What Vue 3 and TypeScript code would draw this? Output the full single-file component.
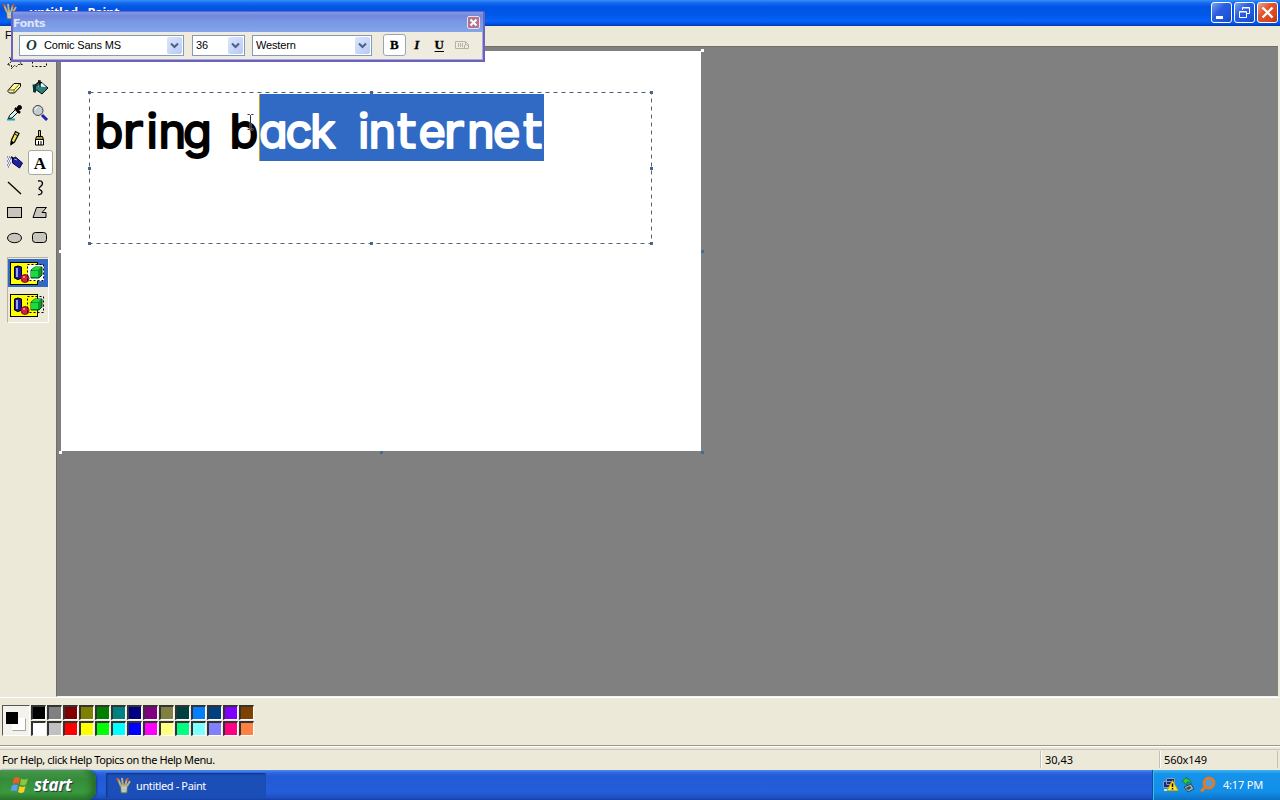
<script setup lang="ts">
interface Swatch { top: string; bottom: string }

const swatches: Swatch[] = [
  { top: '#000000', bottom: '#ffffff' },
  { top: '#808080', bottom: '#c0c0c0' },
  { top: '#800000', bottom: '#ff0000' },
  { top: '#808000', bottom: '#ffff00' },
  { top: '#008000', bottom: '#00ff00' },
  { top: '#008080', bottom: '#00ffff' },
  { top: '#000080', bottom: '#0000ff' },
  { top: '#800080', bottom: '#ff00ff' },
  { top: '#808040', bottom: '#ffff80' },
  { top: '#004040', bottom: '#00ff80' },
  { top: '#0080ff', bottom: '#80ffff' },
  { top: '#004080', bottom: '#8080ff' },
  { top: '#8000ff', bottom: '#ff0080' },
  { top: '#804000', bottom: '#ff8040' },
]

const tools: string[] = [
  'free', 'select', 'eraser', 'fill', 'pick', 'magnify', 'pencil', 'brush',
  'spray', 'text', 'line', 'curve', 'rect', 'polygon', 'ellipse', 'rounded',
]

const frameHandles: number[][] = [
  [0, 0], [282, 0], [562, 0], [0, 76], [562, 76], [0, 151], [282, 151], [562, 151],
]
</script>

<template>
  <div class="desktop">
    <header class="titlebar">
      <svg class="app-icon" width="16" height="18" viewBox="0 0 16 18">
        <path d="M4 8h8l-1 8H5z" fill="#a9c0c8" stroke="#4a6078" />
        <path d="M5 9L2 2M7 9L6 1M9 9L11 2M11 9L14 4" stroke="#c0b078" stroke-width="2" />
        <path d="M2 4L1 1M11 4l1-3" stroke="#b05040" stroke-width="2" />
        <path d="M6 11h4M6 14h3" stroke="#e8e060" />
      </svg>
      <span class="title-text">untitled - Paint</span>
      <div class="win-buttons">
        <span class="win-btn"><svg width="19" height="19"><path d="M4 14.500h7" stroke="#fff" stroke-width="3" /></svg></span>
        <span class="win-btn"><svg width="19" height="19" fill="none" stroke="#fff"><path d="M7.500 7V4.500h7v6h-3M7 5h8" /><path d="M4.500 8.500h7v6h-7zM4 9h8" /></svg></span>
        <span class="win-btn close"><svg width="19" height="19"><path d="M4.500 4.500l10 10M14.500 4.500l-10 10" stroke="#fff" stroke-width="2.300" /></svg></span>
      </div>
    </header>
    <nav class="menubar">File</nav>

    <main class="workspace">
      <aside class="toolbox">
        <div class="tools">
          <span v-for="t in tools" :key="t" class="tool" :class="{ active: t === 'text' }">
            <svg width="20" height="20" viewBox="0 0 20 20" fill="none" stroke="#000">
              <path v-if="t === 'free'" d="M2.500 11.500l4-3-2-4 5 3 5-3-1 4 4 3h-4l-2 2-2-1-3 3v-3z" stroke-dasharray="2 1" />
              <rect v-else-if="t === 'select'" x="2.500" y="4.500" width="14" height="9" stroke-dasharray="2 2" />
              <g v-else-if="t === 'eraser'">
                <path d="M3 12.500L9 5.500h6.500v3l-6 6.500H4.500L3 13.500z" fill="#fff5a0" />
                <path d="M3.500 12h5.500l6-6.500M9 12v3" stroke="#6a6420" />
              </g>
              <g v-else-if="t === 'fill'">
                <path d="M5 9l6-5 7 6-6 6-7-5z" fill="#2a7f80" />
                <path d="M8 8.500l4-3.500 4 4z" fill="#e8ffff" stroke="none" />
                <path d="M4 14V8l5-4M10 9V3H8" stroke-width="1.300" />
                <path d="M2.500 6.500h3.500v8H3.500z" fill="#033" stroke="none" />
              </g>
              <g v-else-if="t === 'pick'">
                <path d="M2 16.500h8" stroke="#22a0b0" stroke-width="2" />
                <path d="M3.500 15.500l1-3 6-6 2.500 2.500-6 6z" fill="#c9f5f6" />
                <path d="M10 5l5 5M11 8l4-4" stroke-width="2.500" />
                <circle cx="14.500" cy="4.500" r="2" fill="#000" />
              </g>
              <g v-else-if="t === 'magnify'">
                <path d="M12 12l5 5" stroke="#2020b0" stroke-width="3" />
                <circle cx="8" cy="7.500" r="5" fill="#c4ccd0" stroke="#444" />
                <path d="M5 7q1-3 3-3" stroke="#fff" />
              </g>
              <g v-else-if="t === 'pencil'">
                <path d="M6 16.500l.5-4.500 4-8.500 3.500 2-4.500 8.500z" fill="#f3e34d" stroke-width="1.200" />
                <path d="M10 6l3 2" /><path d="M6 16.500l.3-3.500 2 1.500z" fill="#000" />
              </g>
              <g v-else-if="t === 'brush'">
                <path d="M8.500 2.500h2v6h-2z" fill="#d8c850" />
                <path d="M6.500 8.500h6l1 3h-8z" fill="#a8a030" />
                <path d="M5.500 11.500h8v5.500h-8z" fill="#fff" /><path d="M8.500 13v4M11 13v4" />
              </g>
              <g v-else-if="t === 'spray'">
                <path d="M7.500 6l3-2 7 6-3 5-7-5z" fill="#20209a" stroke="#000050" />
                <path d="M9 6l3 1" stroke="#9aaaff" /><path d="M6 4l3 2" stroke-width="2" />
                <path d="M2 4h5M3 6h4M2 8h4M3 10h3M2 12h3M3 14h2" stroke="#3030c8" stroke-dasharray="1 1" />
              </g>
              <text v-else-if="t === 'text'" x="10" y="15.500" class="tool-letter" text-anchor="middle">A</text>
              <path v-else-if="t === 'line'" d="M3 4l13 12" stroke-width="1.300" />
              <path v-else-if="t === 'curve'" d="M8 3c5-1 6 3 2 6-4 3 5 3 1 7l-3 1" stroke-width="1.300" />
              <rect v-else-if="t === 'rect'" x="2.500" y="4.500" width="14" height="10" fill="#c8c6bc" />
              <path v-else-if="t === 'polygon'" d="M6.500 4.500h10l-4.500 5h4v5h-13z" fill="#c8c6bc" />
              <ellipse v-else-if="t === 'ellipse'" cx="9.500" cy="10" rx="7" ry="4.700" fill="#c8c6bc" />
              <rect v-else x="2.500" y="4.500" width="14" height="10" rx="3" fill="#c8c6bc" />
            </svg>
          </span>
        </div>
        <div class="options">
          <span v-for="n in 2" :key="n" class="option" :class="{ chosen: n === 1 }">
            <svg width="36" height="25" viewBox="0 0 36 25">
              <rect x=".5" y="1.500" width="27" height="22" fill="#ffff00" stroke="#000" />
              <rect v-if="n === 1" x="18" y="4" width="16" height="16" fill="#fff" />
              <path d="M4.500 6v11q3.500 3 7 0V6q-3.500-2-7 0z" fill="#1818a8" stroke="#000" />
              <path d="M7 7v9" stroke="#c4d8ff" stroke-width="1.500" />
              <circle cx="15" cy="17.500" r="4" fill="#dc1c38" stroke="#7c1020" />
              <circle cx="14" cy="16" r="1" fill="#ffb0b0" />
              <path d="M21 9l4-3h7v8l-3 3h-8z" fill="#08a020" stroke="#043" />
              <path d="M21 9l4-3h6l-3 3zM21 10h7v6h-7z" fill="#20d840" />
              <rect x="17.500" y="3.500" width="16" height="16" fill="none" stroke="#000" stroke-dasharray="2 2" />
            </svg>
          </span>
        </div>
      </aside>

      <section class="canvas-area">
        <div class="sheet">
          <svg class="drawing" width="640" height="400" viewBox="61 51 640 400">
            <rect x="259.500" y="94" width="284.500" height="67" fill="#316ac5" />
            <path d="M259.500 94v67" stroke="#d0a020" />
            <g class="lettering">
              <text class="plain" x="94.500 122.500 146.500 158.500 183 200 229.500" y="147.500">b<tspan class="wide">r</tspan>ing b</text>
              <text class="picked" x="259 285.500 310 340 358 368.500 397 418.500 443.500 467 493 523" y="147.500">ack in<tspan class="wide">t</tspan>e<tspan class="wide">r</tspan>ne<tspan class="wide">t</tspan></text>
            </g>
            <rect x="89.500" y="92.500" width="562" height="151" fill="none" stroke="#4e6278" stroke-dasharray="4 4" />
            <rect v-for="(h, i) in frameHandles" :key="i" :x="88 + h[0]" :y="91 + h[1]" width="3" height="3" fill="#4b668c" />
            <path d="M247.500 114.500h2l1 1 1-1h2M250.500 115.500v13M247.500 129.500h2l1-1 1 1h2" fill="none" stroke="#fff" stroke-width="2" opacity=".5" />
            <path d="M247.500 114.500h2l1 1 1-1h2M250.500 115.500v13M247.500 129.500h2l1-1 1 1h2" fill="none" stroke="#333" />
          </svg>
          <i class="grip nw"></i><i class="grip ne"></i><i class="grip w"></i><i class="grip sw"></i>
          <i class="grip e blue"></i><i class="grip se blue"></i><i class="grip s blue"></i>
        </div>
      </section>
    </main>

    <section class="palette">
      <div class="current"><span class="back"></span><span class="fore"></span></div>
      <div class="colors">
        <div v-for="(s, i) in swatches" :key="i" class="pair">
          <span class="swatch" :style="{ background: s.top }"></span>
          <span class="swatch" :style="{ background: s.bottom }"></span>
        </div>
      </div>
    </section>

    <footer class="statusbar">
      <span class="help">For Help, click Help Topics on the Help Menu.</span>
      <span class="cell pos">30,43</span>
      <span class="cell size">560x149</span>
    </footer>

    <div class="taskbar">
      <div class="start">
        <svg width="20" height="20" viewBox="0 0 20 20">
          <path d="M4 3q3-2 6 0L8.500 9q-3-2-6 0z" fill="#ee5b24" />
          <path d="M11 3.500q3 2 7 0l-2 6q-3 2-6 0z" fill="#8cc63e" />
          <path d="M2 10.500q3-2 6 0L6.500 16.500q-3-2-6 0z" fill="#5f9cf2" />
          <path d="M9.500 11q3 2 6 0l-1.500 6q-3 2-6 0z" fill="#ffcc28" />
        </svg>
        <span>start</span>
      </div>
      <div class="task">
        <svg width="16" height="18" viewBox="0 0 16 18">
          <path d="M4 8h8l-1 8H5z" fill="#a9c0c8" stroke="#4a6078" />
          <path d="M5 9L2 2M7 9L6 1M9 9L11 2M11 9L14 4" stroke="#c0b078" stroke-width="2" />
          <path d="M2 4L1 1M11 4l1-3" stroke="#c05848" stroke-width="2" />
          <path d="M6 11h4M6 14h3" stroke="#e8e060" />
        </svg>
        <span>untitled - Paint</span>
      </div>
      <div class="tray">
        <svg width="56" height="18" viewBox="0 0 56 18">
          <path d="M4.500 2.500h8v6h-8zM1.500 5.500h8v6h-8z" fill="#18287c" stroke="#8c9cb8" />
          <path d="M2 14h7" stroke="#ddd" stroke-width="2" />
          <path d="M10.500 4.500l5.500 10H5z" fill="#ffe62e" stroke="#d0a800" />
          <path d="M10.500 7.500v3.500M10.500 12v1.500" stroke="#000" stroke-width="1.500" />
          <path d="M22 11l7-3 3 5-6 3z" fill="#9ab0b8" stroke="#304858" />
          <path d="M24 12l4-2 1 2-3 2z" fill="#304858" />
          <path d="M20 5l5-4v2q4 0 4 5-2-3-4-2v3z" fill="#38c838" stroke="#087018" stroke-width=".7" />
          <circle cx="47" cy="7" r="5" fill="#48a0dc" stroke="#e87820" stroke-width="2.800" />
          <path d="M43.500 10.500L39 15.500" stroke="#e87820" stroke-width="3" />
        </svg>
        <span class="clock">4:17 PM</span>
      </div>
    </div>

    <div class="fonts-window">
      <div class="fonts-title"><span>Fonts</span>
        <span class="fonts-close"><svg width="11" height="11"><path d="M2.500 2.500l6 6M8.500 2.500l-6 6" stroke="#fff" stroke-width="2" /></svg></span>
      </div>
      <div class="fonts-body">
        <div class="combo family"><i class="ot">O</i><span>Comic Sans MS</span><b class="drop"><svg width="9" height="7"><path d="M1 1.500l3.500 3.500L8 1.500" fill="none" stroke="#4d6185" stroke-width="2" /></svg></b></div>
        <div class="combo points"><span>36</span><b class="drop"><svg width="9" height="7"><path d="M1 1.500l3.500 3.500L8 1.500" fill="none" stroke="#4d6185" stroke-width="2" /></svg></b></div>
        <div class="combo script"><span>Western</span><b class="drop"><svg width="9" height="7"><path d="M1 1.500l3.500 3.500L8 1.500" fill="none" stroke="#4d6185" stroke-width="2" /></svg></b></div>
        <div class="formats">
          <span class="fmt on">B</span><span class="fmt ital">I</span><span class="fmt under">U</span>
          <span class="fmt"><svg width="14" height="10" fill="none" stroke="#b5b2a4"><path d="M.5 1.500h10l3 3v4H.500zM3.500 3v4M5.500 3v4M7.500 3v4M10.500 2v3h3M9.500 5v3" /></svg></span>
        </div>
      </div>
    </div>
  </div>
</template>

<style>
body { margin: 0; overflow: hidden; }
</style>

<style scoped>
* { box-sizing: border-box; }
svg { display: block; flex: none; }
.desktop { position: relative; display: flex; flex-direction: column; width: 1280px; height: 800px; overflow: hidden; background: #ece9d8; font: 11px "Liberation Sans", Arial, sans-serif; color: #000; white-space: nowrap; }

.titlebar { display: flex; align-items: center; height: 26px; flex: none; padding: 0 2px; background: linear-gradient(#3291f8 0, #1668ee 3px, #0054e3 7px, #0058ea 15px, #0662f8 21px, #0050d8 24px, #0038b4 26px); }
.app-icon { margin-top: -3px; }
.title-text { margin: -2px 0 0 11px; font: bold 13px/18px "Noto Sans", sans-serif; letter-spacing: -.4px; color: #fff; text-shadow: 1px 1px #0a2a8a; }
.win-buttons { display: flex; gap: 2px; margin: -1px 0 0 auto; }
.win-btn { display: flex; align-items: center; justify-content: center; width: 21px; height: 21px; border: 1px solid #fff; border-radius: 3px; background: linear-gradient(135deg, #7c9ff0, #2a5ee0 40%, #1d55dc 75%, #1846b8); }
.win-btn.close { background: linear-gradient(135deg, #f0a088, #e2532c 40%, #d84820 75%, #b43010); }
.menubar { height: 20px; flex: none; padding: 3px 5px; }

.workspace { display: flex; height: 651px; flex: none; padding-right: 2px; }
.toolbox { width: 56px; flex: none; padding: 4px 0 0 2px; }
.tools { display: grid; grid-template-columns: 25px 25px; grid-auto-rows: 25px; }
.tool { display: flex; align-items: center; justify-content: center; }
.tool.active { margin-left: 1px; margin-right: -1px; padding-right: 2px; border: 1px solid #aaa9a0; border-radius: 3px; background: #fff; }
.tool-letter { font: bold 17px "Liberation Serif", serif; fill: #000; stroke: none; }
.options { width: 42px; height: 66px; margin: 7px 0 0 5px; padding: 1px 0; border: 1px solid; border-color: #b5b2a4 #fff #fff #b5b2a4; }
.option { display: flex; align-items: center; justify-content: center; height: 28px; margin-bottom: 4px; }
.option.chosen { background: #316ac5; }

.canvas-area { flex: 1; padding: 4px 0 0 4px; border: solid #716f64; border-width: 1px 0 0 1px; border-bottom: 1px solid #f5f3ea; background: #808080; }
.sheet { position: relative; width: 640px; height: 400px; background: #fff; }
.lettering { font-family: Inter, "Noto Sans", sans-serif; font-size: 47px; font-weight: 400; font-feature-settings: "cv11"; stroke-width: 2px; stroke-linejoin: round; stroke-linecap: round; }
.wide { font-family: "DejaVu Sans", sans-serif; font-size: 48px; }
.plain { fill: #000; stroke: #000; }
.picked { fill: #fff; stroke: #fff; }
.grip { position: absolute; width: 3px; height: 3px; background: #fff; }
.grip.blue { background: #426a9c; }
.nw { left: -2px; top: -2px; }
.ne { left: 640px; top: -2px; }
.w { left: -2px; top: 199px; }
.sw { left: -2px; top: 400px; }
.e { left: 640px; top: 199px; }
.se { left: 640px; top: 400px; }
.s { left: 319px; top: 400px; }

.palette { display: flex; height: 49px; flex: none; padding: 7px 0 0 2px; border-top: 1px solid #fff; border-bottom: 1px solid #9c998b; }
.current { position: relative; width: 28px; height: 31px; border: 1px solid; border-color: #555 #fff #fff #555; background: #f4f2ec; }
.current .fore { position: absolute; left: 3px; top: 6px; width: 12px; height: 12px; background: #000; }
.current .back { position: absolute; left: 9px; top: 12px; width: 14px; height: 13px; border: 1px solid; border-color: #fff #aaa79b #aaa79b #fff; background: #fff; }
.colors { display: flex; margin-left: 1px; }
.pair { display: flex; flex-direction: column; width: 16px; }
.swatch { width: 15px; height: 15px; margin-bottom: 1px; border: solid; border-width: 2px 1px 1px 2px; border-color: #333 #fff #fff #333; }

.statusbar { display: flex; align-items: center; height: 24px; flex: none; padding-top: 2px; border-top: 1px solid #fff; box-shadow: inset 0 2px #ece9d8, inset 0 3px #c9c6b8; font: 11px "Noto Sans", sans-serif; }
.help { width: 1040px; padding-left: 2px; letter-spacing: -.43px; }
.cell { height: 17px; padding-left: 4px; line-height: 17px; border-left: 1px solid #c4c1b2; box-shadow: inset 1px 0 #fff; }
.pos { width: 119px; }
.size { width: 119px; border-right: 1px solid #c4c1b2; letter-spacing: -.1px; }

.taskbar { display: flex; height: 30px; flex: none; background: linear-gradient(#4b8df2, #2a66dd 3px, #2359d6 7px, #245edb 22px, #1d4fc0 28px, #173f9e); }
.start { display: flex; align-items: center; width: 96px; padding-left: 10px; border-radius: 0 9px 9px 0; background: linear-gradient(#74b874, #43994a 3px, #368b3a 9px, #3a9a3e 22px, #2c7a30); box-shadow: inset -5px 0 6px #276c2a, 1px 0 2px #143c98; }
.start span { margin: 0 0 0 4px; font: italic bold 17px/20px "Noto Sans", sans-serif; color: #fff; text-shadow: 1px 1px 1px #234; letter-spacing: -.3px; }
.task { display: flex; align-items: center; width: 160px; height: 25px; margin: 3px 0 0 10px; padding-left: 10px; border-radius: 2px; background: #1c4eb8; box-shadow: inset 1px 1px 2px #0f3180; color: #fff; font: 11px "Noto Sans", sans-serif; }
.task span { margin-left: 4px; letter-spacing: -.37px; }
.tray { display: flex; align-items: center; width: 128px; margin-left: auto; padding-left: 9px; border-left: 1px solid #0b4c9e; background: linear-gradient(#3cb6f4, #1592ea 4px, #128fe8 22px, #0d70c4); box-shadow: inset 1px 0 #35bdf5; }
.clock { margin: -2px 0 0 5px; font: 11px "Noto Sans", sans-serif; letter-spacing: -.2px; color: #fff; }

.fonts-window { position: absolute; left: 11px; top: 11px; width: 474px; height: 51px; border: 2px solid #6a63be; border-width: 1px 2px 2px 2px; border-radius: 2px 2px 0 0; background: #efecdf; box-shadow: inset -1px -1px #a9a6e2; }
.fonts-title { display: flex; align-items: center; justify-content: space-between; height: 20px; padding: 1px 3px 0 0; background: linear-gradient(#809ce8, #7386dc 4px, #7896e2 9px, #83a5ea); font: bold 11px "DejaVu Sans", sans-serif; letter-spacing: -.4px; color: #dde5fb; }
.fonts-title > span:first-child { padding-top: 1px; }
.fonts-close { display: flex; align-items: center; justify-content: center; width: 13px; height: 13px; border: 1px solid #e5dff4; border-radius: 2px; background: #b5748c; }
.fonts-body { display: flex; align-items: center; height: 26px; padding: 0 0 0 6px; }
.combo { display: flex; align-items: center; height: 21px; border: 1px solid #7f9db9; background: #fff; padding-right: 1px; }
.combo span { letter-spacing: -.15px; }
.drop { display: flex; align-items: center; justify-content: center; width: 15px; height: 17px; margin-left: auto; border-radius: 2px; background: linear-gradient(135deg, #dce6fd, #b7caf5); }
.family { width: 165px; }
.ot { width: 24px; padding-left: 6px; font: italic bold 15px "Liberation Serif", serif; color: #173a38; }
.points { width: 53px; margin-left: 8px; }
.points span, .script span { padding-left: 3px; }
.script { width: 120px; margin-left: 7px; }
.formats { display: flex; align-items: center; margin-left: 11px; }
.fmt { display: flex; align-items: center; justify-content: center; width: 22.500px; height: 22px; font: bold 13px "Liberation Serif", serif; -webkit-text-stroke: .3px #000; }
.fmt.on { border: 1px solid #98a6b4; border-radius: 3px; background: #fff; }
.fmt.ital { font-style: italic; }
.fmt.under { text-decoration: underline; text-underline-offset: 2px; }
</style>
